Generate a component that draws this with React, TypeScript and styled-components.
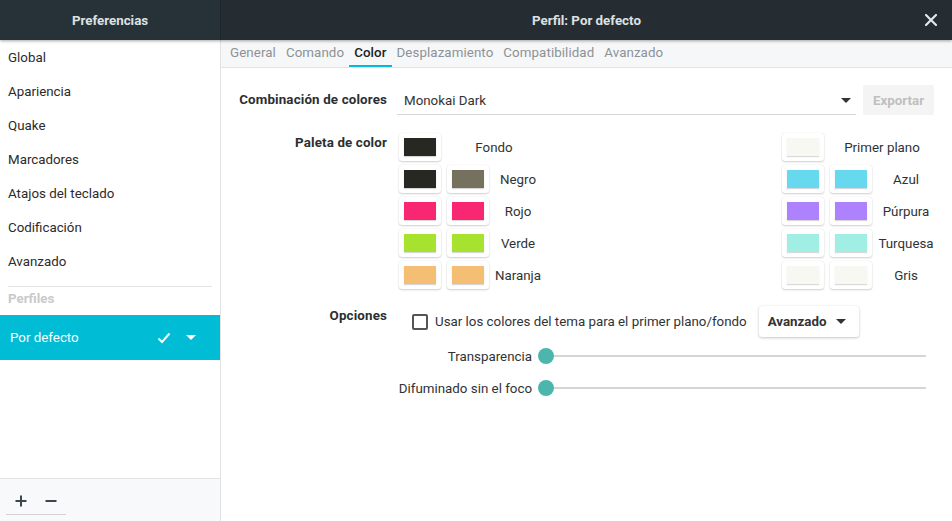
import React from "react";
import styled, { createGlobalStyle } from "styled-components";

const Global = createGlobalStyle`
  html, body { margin: 0; padding: 0; }
  body {
    font-family: Roboto, "Noto Sans", "Liberation Sans", sans-serif;
    font-size: 13.333px;
    color: #333;
    background: #fff;
  }
  * { box-sizing: border-box; }
`;

const Window = styled.div`
  width: 952px;
  height: 521px;
  display: flex;
  flex-direction: column;
  overflow: hidden;
  background: #fff;
`;

const Header = styled.header`
  height: 40px;
  flex: none;
  display: flex;
  background: #263238;
  color: #dde1e3;
  font-weight: 700;
  box-shadow: 0 1px 3px rgba(0, 0, 0, 0.35);
  position: relative;
  z-index: 2;
`;

const HeaderLeft = styled.div`
  width: 221px;
  border-right: 1px solid #1d262b;
  display: flex;
  align-items: center;
  justify-content: center;
`;

const HeaderRight = styled.div`
  flex: 1;
  display: flex;
  align-items: center;
  justify-content: center;
  position: relative;
  background: #252d32;
`;

const CloseButton = styled.button`
  position: absolute;
  right: 13px;
  top: 12px;
  width: 16px;
  height: 16px;
  padding: 0;
  border: 0;
  background: transparent;
  display: flex;
  align-items: center;
  justify-content: center;
`;

const Body = styled.div`
  flex: 1;
  display: flex;
  min-height: 0;
`;

const Sidebar = styled.aside`
  width: 221px;
  flex: none;
  border-right: 1px solid #e2e2e2;
  display: flex;
  flex-direction: column;
`;

const NavItem = styled.div`
  height: 34px;
  line-height: 36px;
  padding-left: 8px;
  color: #2b2b2b;
`;

const Separator = styled.div`
  margin: 8px 8px 0;
  height: 1px;
  background: #e4e4e4;
`;

const SectionTitle = styled.div`
  height: 28px;
  line-height: 23px;
  padding-left: 8px;
  font-weight: 700;
  color: #c9c9c9;
`;

const ProfileRow = styled.div<{ $selected?: boolean }>`
  height: 45px;
  display: flex;
  align-items: center;
  padding: 0 24px 0 10px;
  background: ${(p) => (p.$selected ? "#00bcd4" : "transparent")};
  color: ${(p) => (p.$selected ? "#fff" : "#333")};
`;

const ProfileName = styled.span`
  flex: 1;
`;

const RowIcons = styled.span`
  display: flex;
  align-items: center;
  gap: 15px;
`;

const Spacer = styled.div`
  flex: 1;
`;

const BottomBar = styled.div`
  height: 43px;
  border-top: 1px solid #e2e2e2;
  background: #f8f9fa;
  padding: 8px 6px 0;
`;

const ButtonGroup = styled.div`
  display: inline-flex;
  border-bottom: 1px solid #d3d3d3;
`;

const ToolButton = styled.button`
  width: 30px;
  height: 27px;
  padding: 0;
  border: 0;
  background: transparent;
  display: flex;
  align-items: center;
  justify-content: center;
`;

const Main = styled.main`
  flex: 1;
  display: flex;
  flex-direction: column;
  min-width: 0;
`;

const TabBar = styled.nav`
  height: 28px;
  flex: none;
  display: flex;
  padding-left: 4px;
  background: #f6f7f8;
  border-bottom: 1px solid #e3e6e8;
`;

const Tab = styled.div<{ $active?: boolean }>`
  padding: 1px 5px 0;
  line-height: 24px;
  height: 27px;
  letter-spacing: 0.08px;
  color: ${(p) => (p.$active ? "#222" : "#8d9296")};
  font-weight: ${(p) => (p.$active ? 500 : 400)};
  border-bottom: 2px solid ${(p) => (p.$active ? "#00bcd4" : "transparent")};
`;

const Content = styled.section`
  padding: 17px 18px 0 18px;
  display: grid;
  grid-template-columns: 148px 1fr;
  column-gap: 12px;
  align-content: start;
`;

const FieldLabel = styled.div<{ $top?: boolean; $mt?: number }>`
  text-align: right;
  font-weight: 700;
  color: #2b2f31;
  line-height: 16px;
  letter-spacing: 0.15px;
  white-space: nowrap;
  align-self: ${(p) => (p.$top ? "start" : "center")};
  padding-top: ${(p) => (p.$top ? "2px" : "0")};
  margin-top: ${(p) => p.$mt ?? 0}px;
`;

const ComboRow = styled.div`
  display: flex;
  align-items: stretch;
  height: 30px;
  gap: 7px;
  margin-left: -2px;
`;

const Combo = styled.div`
  flex: 1;
  display: flex;
  align-items: center;
  padding: 1px 5px 0 7px;
  border-bottom: 1px solid #d6d6d6;
  color: #333;
`;

const ComboText = styled.span`
  flex: 1;
`;

const Caret = styled.span<{ $color?: string }>`
  width: 0;
  height: 0;
  border-left: 5px solid transparent;
  border-right: 5px solid transparent;
  border-top: 5px solid ${(p) => p.$color ?? "#333"};
`;

const ExportButton = styled.button`
  width: 71px;
  border: 0;
  border-radius: 2px;
  background: #f4f4f4;
  color: #bfbfbf;
  font: inherit;
  font-weight: 700;
  padding: 0;
`;

const Palette = styled.div`
  margin-top: 18px;
  display: grid;
  grid-template-columns: 42px 42px 46px 1fr 42px 42px 56px;
  grid-auto-rows: 28px;
  column-gap: 6px;
  row-gap: 4px;
`;

const Swatch = styled.div<{ $col: number }>`
  grid-column: ${(p) => p.$col};
  display: flex;
  align-items: center;
  justify-content: center;
  background: #fff;
  border-radius: 3px;
  box-shadow: 0 1px 2px rgba(0, 0, 0, 0.18), 0 0 1px rgba(0, 0, 0, 0.12);
`;

const SwatchFill = styled.div`
  width: 32px;
  height: 18px;
  box-shadow: 0 1px 1px rgba(0, 0, 0, 0.15);
`;

const SwatchLabel = styled.div<{ $col: string }>`
  grid-column: ${(p) => p.$col};
  display: flex;
  align-items: center;
  justify-content: center;
  white-space: nowrap;
  color: #2e3436;
`;

const OptionsRow = styled.div`
  margin-top: 17px;
  display: flex;
  align-items: center;
  height: 31px;
`;

const CheckLabel = styled.label`
  display: flex;
  align-items: center;
  gap: 7px;
  margin-left: 13px;
  color: #2e3436;
`;

const CheckBox = styled.span`
  width: 16px;
  height: 16px;
  border: 2px solid #555;
  border-radius: 2px;
  margin-top: 1px;
`;

const DropButton = styled.button`
  margin-left: 12px;
  width: 100px;
  height: 31px;
  display: flex;
  align-items: center;
  justify-content: space-between;
  padding: 0 13px 0 9px;
  border: 0;
  border-radius: 3px;
  background: #fff;
  box-shadow: 0 1px 3px rgba(0, 0, 0, 0.22), 0 0 1px rgba(0, 0, 0, 0.1);
  font: inherit;
  font-weight: 700;
  color: #333;
`;

const Sliders = styled.div`
  margin-top: 3px;
  display: grid;
  grid-template-columns: 133px 1fr;
  grid-auto-rows: 32px;
  column-gap: 6px;
`;

const SliderLabel = styled.div`
  display: flex;
  align-items: center;
  justify-content: flex-end;
  white-space: nowrap;
  color: #2e3436;
`;

const Slider = styled.div`
  position: relative;
  display: flex;
  align-items: center;
  padding: 0 8px;
`;

const Track = styled.div`
  flex: 1;
  height: 2px;
  background: #d2d6d6;
`;

const Knob = styled.div`
  position: absolute;
  left: 0;
  top: 8px;
  width: 16px;
  height: 16px;
  border-radius: 50%;
  background: #4db6ac;
`;

const navItems = ["Global", "Apariencia", "Quake", "Marcadores", "Atajos del teclado", "Codificación", "Avanzado"];
const tabs = ["General", "Comando", "Color", "Desplazamiento", "Compatibilidad", "Avanzado"];

type Row = { left: string[]; leftLabel: string; right: string[]; rightLabel: string };
const rows: Row[] = [
  { left: ["#272822"], leftLabel: "Fondo", right: ["#f8f8f2"], rightLabel: "Primer plano" },
  { left: ["#272822", "#75715e"], leftLabel: "Negro", right: ["#66d9ef", "#66d9ef"], rightLabel: "Azul" },
  { left: ["#f92672", "#f92672"], leftLabel: "Rojo", right: ["#ae81ff", "#ae81ff"], rightLabel: "Púrpura" },
  { left: ["#a6e22e", "#a6e22e"], leftLabel: "Verde", right: ["#a1efe4", "#a1efe4"], rightLabel: "Turquesa" },
  { left: ["#f4bf75", "#f4bf75"], leftLabel: "Naranja", right: ["#f8f8f2", "#f8f8f2"], rightLabel: "Gris" },
];

export default function App() {
  return (
    <>
      <Global />
      <Window>
        <Header>
          <HeaderLeft>Preferencias</HeaderLeft>
          <HeaderRight>
            Perfil: Por defecto
            <CloseButton aria-label="Cerrar">
              <svg width="12" height="12" viewBox="0 0 12 12">
                <path d="M1 1L11 11M11 1L1 11" stroke="#e4e7e8" strokeWidth="2.2" strokeLinecap="square" />
              </svg>
            </CloseButton>
          </HeaderRight>
        </Header>
        <Body>
          <Sidebar>
            {navItems.map((n) => (
              <NavItem key={n}>{n}</NavItem>
            ))}
            <Separator />
            <SectionTitle>Perfiles</SectionTitle>
            <ProfileRow $selected>
              <ProfileName>Por defecto</ProfileName>
              <RowIcons>
                <svg width="14" height="12" viewBox="0 0 14 12">
                  <path d="M1.5 6.5L5 10L12.5 1.5" fill="none" stroke="#fff" strokeWidth="2" />
                </svg>
                <Caret $color="#fff" />
              </RowIcons>
            </ProfileRow>
            <Spacer />
            <BottomBar>
              <ButtonGroup>
                <ToolButton aria-label="Añadir">
                  <svg width="12" height="12" viewBox="0 0 12 12">
                    <path d="M6 0.5V11.5M0.5 6H11.5" stroke="#3c474d" strokeWidth="2" />
                  </svg>
                </ToolButton>
                <ToolButton aria-label="Quitar">
                  <svg width="12" height="12" viewBox="0 0 12 12">
                    <path d="M0.5 6H11.5" stroke="#3c474d" strokeWidth="2" />
                  </svg>
                </ToolButton>
              </ButtonGroup>
            </BottomBar>
          </Sidebar>
          <Main>
            <TabBar>
              {tabs.map((t) => (
                <Tab key={t} $active={t === "Color"}>
                  {t}
                </Tab>
              ))}
            </TabBar>
            <Content>
              <FieldLabel>Combinación de colores</FieldLabel>
              <ComboRow>
                <Combo>
                  <ComboText>Monokai Dark</ComboText>
                  <Caret />
                </Combo>
                <ExportButton>Exportar</ExportButton>
              </ComboRow>

              <FieldLabel $top $mt={18}>Paleta de color</FieldLabel>
              <Palette>
                {rows.map((r, i) => (
                  <React.Fragment key={i}>
                    {r.left.map((c, j) => (
                      <Swatch key={"l" + j} $col={j + 1}>
                        <SwatchFill style={{ background: c }} />
                      </Swatch>
                    ))}
                    <SwatchLabel $col={r.left.length === 1 ? "2 / 4" : "3"}>{r.leftLabel}</SwatchLabel>
                    {r.right.map((c, j) => (
                      <Swatch key={"r" + j} $col={j + 5}>
                        <SwatchFill style={{ background: c }} />
                      </Swatch>
                    ))}
                    <SwatchLabel $col={r.right.length === 1 ? "6 / 8" : "7"}>{r.rightLabel}</SwatchLabel>
                  </React.Fragment>
                ))}
              </Palette>

              <FieldLabel $top $mt={17}>Opciones</FieldLabel>
              <div>
                <OptionsRow>
                  <CheckLabel>
                    <CheckBox />
                    Usar los colores del tema para el primer plano/fondo
                  </CheckLabel>
                  <DropButton>
                    Avanzado
                    <Caret />
                  </DropButton>
                </OptionsRow>
                <Sliders>
                  <SliderLabel>Transparencia</SliderLabel>
                  <Slider>
                    <Track />
                    <Knob />
                  </Slider>
                  <SliderLabel>Difuminado sin el foco</SliderLabel>
                  <Slider>
                    <Track />
                    <Knob />
                  </Slider>
                </Sliders>
              </div>
            </Content>
          </Main>
        </Body>
      </Window>
    </>
  );
}
